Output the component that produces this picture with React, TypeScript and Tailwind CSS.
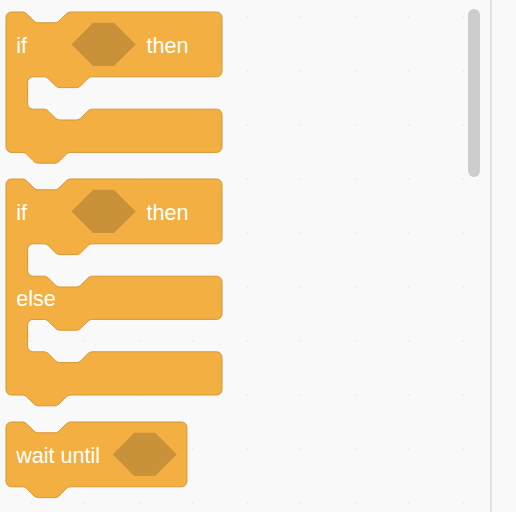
import React from "react";

// scratch-style geometry, in base units, scaled up for the toolbox
const S = 1.35;
const FILL = "#f4af42";
const STROKE = "#d49832";
const SLOT = "#c9913a";

const notchL = "c 2,0 3,1 4,2 l 4,4 c 1,1 2,2 4,2 h 12 c 2,0 3,-1 4,-2 l 4,-4 c 1,-1 2,-2 4,-2";
const notchR = "c -2,0 -3,1 -4,2 l -4,4 c -1,1 -2,2 -4,2 h -12 c -2,0 -3,-1 -4,-2 l -4,-4 c -1,-1 -2,-2 -4,-2";

// arms = heights of each orange row, a 24 unit mouth sits between them
function blockPath(w: number, arms: number[]) {
    let d = `M 0,4 a 4,4 0 0,1 4,-4 H 12 ${notchL} H ${w - 4} a 4,4 0 0,1 4,4`;
    let y = 0;
    arms.forEach((h, i) => {
        y += h;
        d += ` V ${y - 4} a 4,4 0 0,1 -4,4`;
        if (i < arms.length - 1) {
            d += ` H 64 ${notchR} H 20 a 4,4 0 0,0 -4,4 V ${y + 20} a 4,4 0 0,0 4,4 H 28 ${notchL} H ${w - 4} a 4,4 0 0,1 4,4`;
            y += 24;
        }
    });
    d += ` H 48 ${notchR} H 4 a 4,4 0 0,1 -4,-4 Z`;
    return { d, h: y };
}

function Hex({ x, y }: { x: number; y: number }) {
    const pts = [
        [x, y + 16], [x + 16, y], [x + 31.5, y], [x + 47.5, y + 16], [x + 31.5, y + 32], [x + 16, y + 32],
    ].map((p) => p.join(",")).join(" ");
    return <polygon points={pts} fill={SLOT} />;
}

function Block({ w, arms, children }: { w: number; arms: number[]; children: React.ReactNode }) {
    const { d, h } = blockPath(w, arms);
    return (
        <svg
            width={w * S + 2}
            height={(h + 8) * S + 2}
            className="block font-['Liberation_Sans',Arial,sans-serif]"
        >
            <g transform={`translate(1,1) scale(${S})`}>
                <path d={d} fill={FILL} stroke={STROKE} strokeWidth={1} vectorEffect="non-scaling-stroke" />
                <g fill="#ffffff" fontSize={16}>
                    {children}
                </g>
            </g>
        </svg>
    );
}

export default function App() {
    return (
        <div className="w-[516px] h-[512px] bg-[#f9f9f9] flex overflow-hidden">
            <div className="relative w-[492px] h-full border-r-2 border-[#e2e2e2] bg-[radial-gradient(circle,#f0f0f0_1px,transparent_1.6px)] bg-[length:54px_54px] bg-[position:4px_-10px]">
                <div className="flex flex-col gap-[14.2px] pl-[5px] pt-[11px]">
                    <Block w={160} arms={[48, 32]}>
                        <text x={7.5} y={30}>if</text>
                        <Hex x={48.5} y={8} />
                        <text x={104} y={30}>then</text>
                    </Block>

                    <Block w={160} arms={[48, 32, 32]}>
                        <text x={7.5} y={30}>if</text>
                        <Hex x={48.5} y={8} />
                        <text x={104} y={30}>then</text>
                        <text x={7.5} y={94}>else</text>
                    </Block>

                    <Block w={134} arms={[48]}>
                        <text x={7.5} y={30}>wait until</text>
                        <Hex x={79} y={8} />
                    </Block>
                </div>

                <div className="absolute left-[468px] top-[9px] w-[12px] h-[168px] rounded-full bg-[#cdcdcd]" />
            </div>
            <div className="flex-1" />
        </div>
    );
}
